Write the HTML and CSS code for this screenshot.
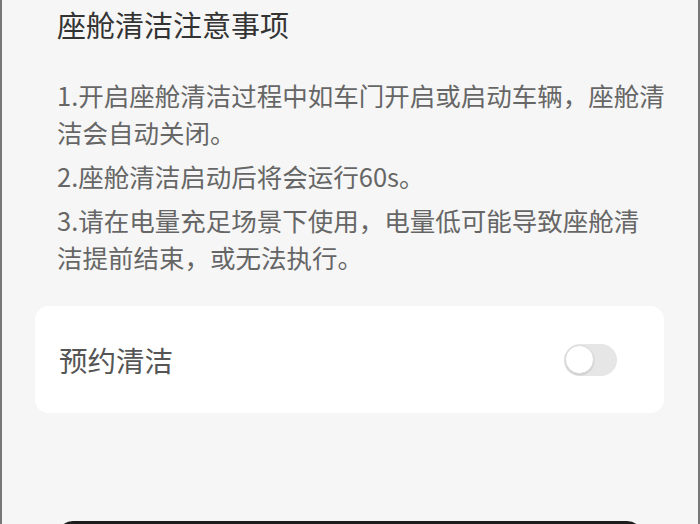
FILE: index.html
```html
<!DOCTYPE html>
<html lang="zh-CN">
<head>
    <meta charset="UTF-8">
    <meta name="viewport" content="width=device-width, initial-scale=1.0">
    <title>座舱清洁</title>
    <link rel="stylesheet" href="styles.css">
</head>
<body>
    <div class="screen">
        <h2 class="notes-title">座舱清洁注意事项</h2>

        <div class="notes">
            <p>1.开启座舱清洁过程中如车门开启或启动车辆，座舱清洁会自动关闭。</p>
            <p>2.座舱清洁启动后将会运行60s。</p>
            <p>3.请在电量充足场景下使用，电量低可能导致座舱清<br>洁提前结束，或无法执行。</p>
        </div>

        <div class="card">
            <span class="card-label">预约清洁</span>
            <label class="switch">
                <input type="checkbox">
                <span class="knob"></span>
            </label>
        </div>

        <div class="bottom-bar">
            <div class="start-btn"></div>
        </div>
    </div>
</body>
</html>
```

FILE: styles.css
```css
html, body {
    margin: 0;
    padding: 0;
    height: 100%;
    overflow: hidden;
}

body {
    font-family: "Noto Sans CJK SC", "Noto Sans", sans-serif;
    background: #f6f6f6;
}

.screen {
    height: 524px;
    box-sizing: border-box;
    border-left: 2px solid #777;
    border-right: 2px solid #777;
    background: #f6f6f6;
    display: flex;
    flex-direction: column;
    overflow: hidden;
}

.notes-title {
    margin: 4px 0 0 55px;
    font-size: 29px;
    font-weight: normal;
    line-height: 40px;
    color: #333;
}

.notes {
    margin: 32px 30px 0 55px;
    font-size: 25.5px;
    line-height: 37px;
    color: #666;
}

.notes p {
    margin: 0 0 7px 0;
}

.card {
    margin: 24px 34px 0 33px;
    height: 107px;
    background: #fff;
    border-radius: 14px;
    display: flex;
    align-items: center;
    justify-content: space-between;
    padding: 0 47px 0 24px;
}

.card-label {
    font-size: 28.5px;
    color: #555;
}

.switch {
    position: relative;
    width: 53px;
    height: 32px;
    display: inline-block;
}

.switch input {
    display: none;
}

.knob {
    position: absolute;
    inset: 0;
    background: #e6e6e6;
    border-radius: 16px;
}

.knob::before {
    content: "";
    position: absolute;
    left: 1px;
    top: 1px;
    width: 29px;
    height: 29px;
    border-radius: 50%;
    background: #fff;
    border: 1px solid #dcdcdc;
    box-sizing: border-box;
    box-shadow: 0 1px 2px rgba(0, 0, 0, 0.15);
}

.bottom-bar {
    margin-top: auto;
    padding: 0 55px;
}

.start-btn {
    height: 60px;
    margin-bottom: -57px;
    border-radius: 16px;
    background: #1c1c1c;
}
```
